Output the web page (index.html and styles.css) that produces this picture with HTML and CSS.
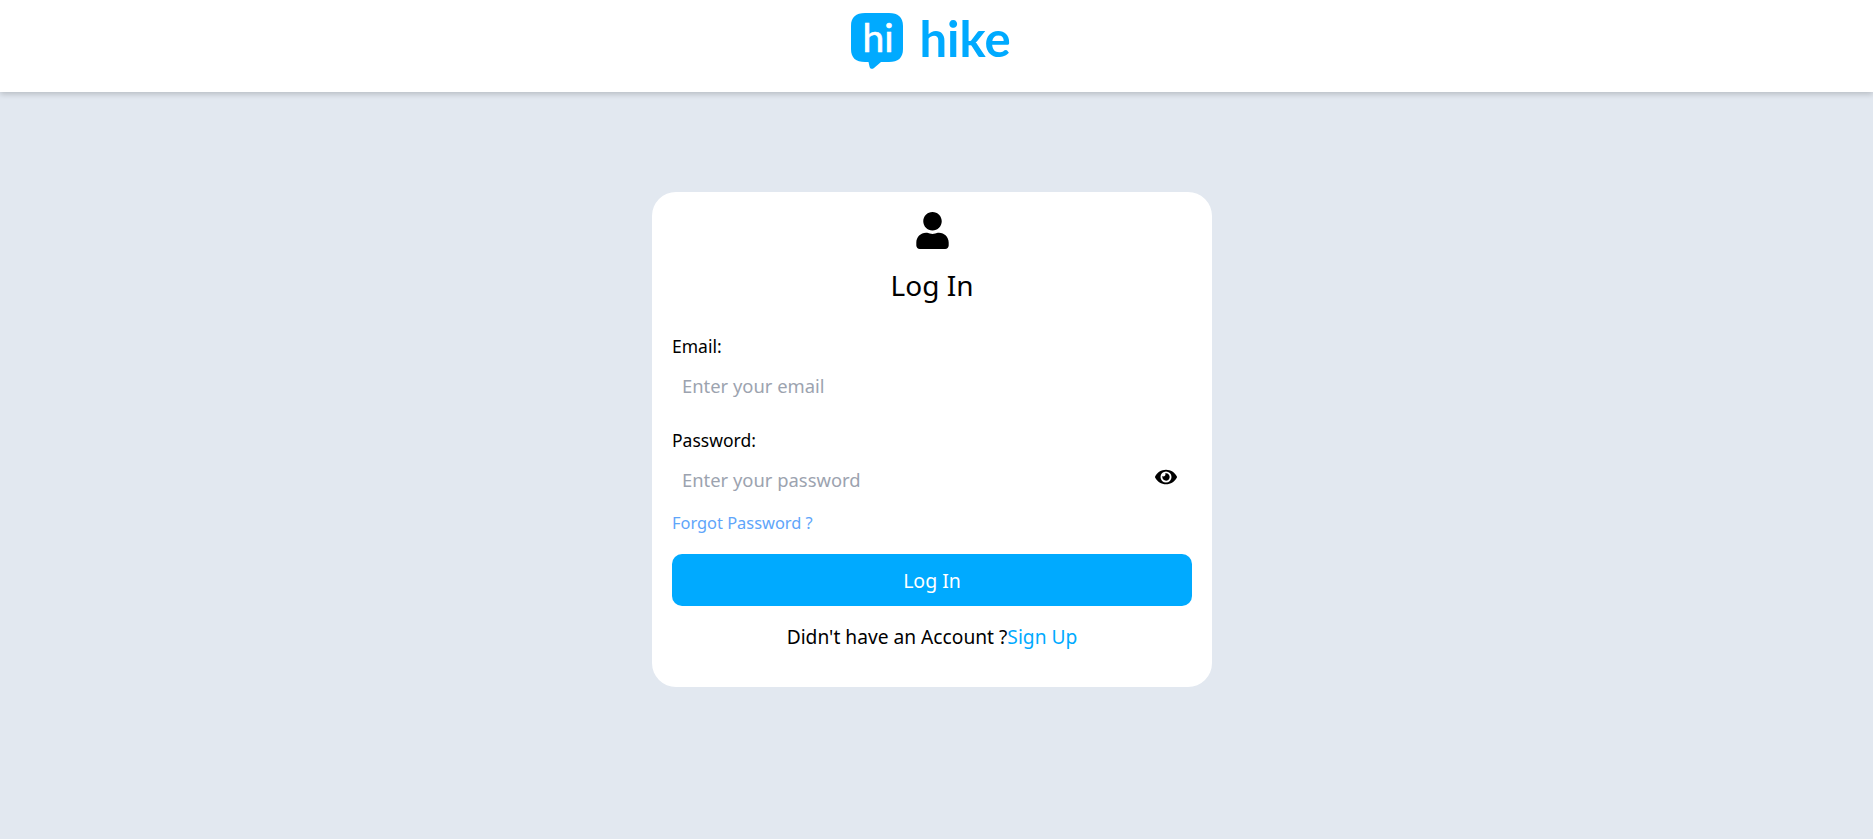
FILE: index.html
```html
<!DOCTYPE html>
<html lang="en">
<head>
    <meta charset="UTF-8">
    <meta name="viewport" content="width=device-width, initial-scale=1.0">
    <title>Hike - Log In</title>
    <link rel="stylesheet" href="styles.css">
</head>
<body>

    <div class="header">
        <a class="logo" href="#">
            <svg class="logo-mark" viewBox="0 0 52 56" aria-hidden="true">
                <path d="M14 0H38C47 0 52 4 52 13V36C52 45 47 49 38 49H30L23 55C21 56.500 19 56 18.500 53.500L17.500 49H14C5 49 0 45 0 36V13C0 4 5 0 14 0Z" fill="#00aaff"/>
                <text class="logo-mark-text" x="27" y="39" text-anchor="middle">hi</text>
            </svg>
            <span class="logo-text">hike</span>
        </a>
    </div>

    <div class="main">
        <form class="card">
            <svg class="user-icon" viewBox="0 0 448 512" aria-hidden="true">
                <path d="M224 256c70.700 0 128-57.300 128-128S294.700 0 224 0 96 57.300 96 128s57.300 128 128 128zm89.600 32h-16.700c-22.200 10.200-46.900 16-72.900 16s-50.600-5.800-72.900-16h-16.700C60.200 288 0 348.200 0 422.400V464c0 26.500 21.500 48 48 48h352c26.500 0 48-21.500 48-48v-41.600c0-74.200-60.200-134.400-134.400-134.400z"/>
            </svg>
            <h1 class="card-title">Log In</h1>

            <div class="field">
                <label class="field-label" for="email">Email:</label>
                <input class="field-input" id="email" type="email" placeholder="Enter your email">
            </div>

            <div class="field field-last">
                <label class="field-label" for="password">Password:</label>
                <div class="password-row">
                    <input class="field-input" id="password" type="password" placeholder="Enter your password">
                    <svg class="eye-icon" viewBox="0 0 576 512" aria-hidden="true">
                        <path d="M572.520 241.400C518.290 135.590 410.930 64 288 64S57.680 135.640 3.480 241.410a32.350 32.350 0 0 0 0 29.190C57.710 376.410 165.070 448 288 448s230.320-71.640 284.520-177.410a32.350 32.350 0 0 0 0-29.190zM288 400a144 144 0 1 1 144-144 143.930 143.930 0 0 1-144 144zm0-240a95.310 95.310 0 0 0-25.310 3.790 47.850 47.850 0 0 1-66.900 66.900A95.780 95.780 0 1 0 288 160z"/>
                    </svg>
                </div>
            </div>

            <a class="forgot-link" href="#">Forgot Password ?</a>
            <button class="submit-button" type="button">Log In</button>
            <p class="signup-text">Didn't have an Account ?<a class="signup-link" href="#">Sign Up</a></p>
        </form>
    </div>

</body>
</html>
```

FILE: styles.css
```css
body {
    font-family: "Noto Sans", "Open Sans", sans-serif;
    background-color: #e2e8f0;
    color: #000;
    margin: 0;
    padding: 0;
    min-height: 839px;
    overflow: hidden;
}
.header {
    height: 92px;
    box-sizing: border-box;
    background-color: white;
    box-shadow: 0 2px 6px rgba(0,0,0,0.2);
    display: flex;
    justify-content: center;
    padding: 13px 11px 0 0;
}
.logo {
    display: flex;
    align-items: flex-start;
    gap: 16px;
    height: 56px;
    text-decoration: none;
}
.logo-mark {
    width: 52px;
    height: 56px;
}
.logo-mark-text {
    font-family: Lato, sans-serif;
    font-size: 39px;
    font-weight: 400;
    fill: white;
    stroke: white;
    stroke-width: 0.6px;
}
.logo-text {
    font-family: Lato, sans-serif;
    font-size: 49px;
    font-weight: 700;
    line-height: 50px;
    color: #00aaff;
}
.main {
    display: flex;
    justify-content: center;
    padding: 100px 9px 0 0;
}
.card {
    width: 560px;
    height: 495px;
    box-sizing: border-box;
    background-color: white;
    border-radius: 24px;
    padding: 20px;
    display: flex;
    flex-direction: column;
}
.user-icon {
    width: 33px;
    height: 37px;
    align-self: center;
}
.card-title {
    font-size: 28px;
    font-weight: 400;
    line-height: 36px;
    text-align: center;
    margin: 18px 0 29px;
}
.field {
    margin-bottom: 19px;
}
.field-last {
    margin-bottom: 0;
}
.field-label {
    display: block;
    font-size: 17.500px;
    line-height: 28px;
    margin-bottom: 3px;
}
.field-input {
    display: block;
    width: 100%;
    box-sizing: border-box;
    height: 44px;
    border: none;
    outline: none;
    background: transparent;
    padding: 0 10px;
    font-family: inherit;
    font-size: 18.400px;
}
.field-input::placeholder {
    color: #9ca3af;
    opacity: 1;
}
.password-row {
    position: relative;
}
.eye-icon {
    position: absolute;
    top: 10px;
    right: 15px;
    width: 22px;
    height: 20px;
}
.forgot-link {
    align-self: flex-start;
    font-size: 16.400px;
    line-height: 24px;
    margin-top: 10px;
    color: #60a5fa;
    text-decoration: none;
}
.submit-button {
    height: 52px;
    margin-top: 19px;
    border: none;
    border-radius: 10px;
    background-color: #00aaff;
    color: white;
    font-family: inherit;
    font-size: 19.500px;
}
.signup-text {
    font-size: 19.200px;
    line-height: 28px;
    text-align: center;
    margin: 17px 0 0;
}
.signup-link {
    color: #00aaff;
    text-decoration: none;
}
```
